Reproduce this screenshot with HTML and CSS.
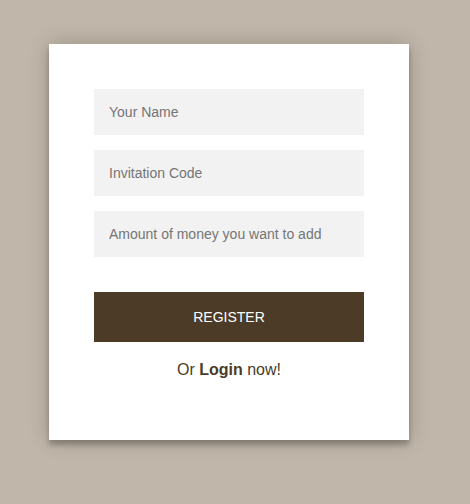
FILE: index.html
```html
<!DOCTYPE html>
<html>
<head>
<meta charset="utf-8">
<link rel="stylesheet" href="styles.css">
</head>
<body>
<div class="page">
  <form class="card">
    <input class="field" type="text" placeholder="Your Name">
    <input class="field" type="text" placeholder="Invitation Code">
    <input class="field" type="text" placeholder="Amount of money you want to add">
    <button class="btn" type="button">REGISTER</button>
    <p class="message">Or <b>Login</b> now!</p>
  </form>
</div>
</body>
</html>
```
FILE: styles.css
```css
html, body {
  margin: 0;
  padding: 0;
  background: #c0b6a9;
  font-family: "Liberation Sans", Arial, sans-serif;
}
.page {
  padding: 44px 0 0 49px;
  height: 504px;
  box-sizing: border-box;
}
.card {
  width: 360px;
  box-sizing: border-box;
  background: #fff;
  padding: 45px 45px 45px 45px;
  height: 396px;
  box-shadow: 0 0 20px rgba(0,0,0,0.2), 0 5px 5px rgba(0,0,0,0.24);
  display: flex;
  flex-direction: column;
}
.field {
  font-family: "Liberation Sans", Arial, sans-serif;
  outline: 0;
  background: #f2f2f2;
  width: 100%;
  border: 0;
  margin: 0 0 15px;
  padding: 15px;
  box-sizing: border-box;
  font-size: 14px;
  height: 46px;
  color: #333;
}
.field::placeholder {
  color: #757575;
}
.btn {
  font-family: "Liberation Sans", Arial, sans-serif;
  text-transform: uppercase;
  outline: 0;
  background: #4b3b27;
  width: 100%;
  border: 0;
  margin-top: 20px;
  padding: 15px;
  height: 50px;
  color: #fff;
  font-size: 14px;
  cursor: pointer;
}
.message {
  margin: 19px 0 0;
  color: #4b3b27;
  font-size: 16px;
  text-align: center;
}
.message b {
  color: #4b3b27;
}
```
